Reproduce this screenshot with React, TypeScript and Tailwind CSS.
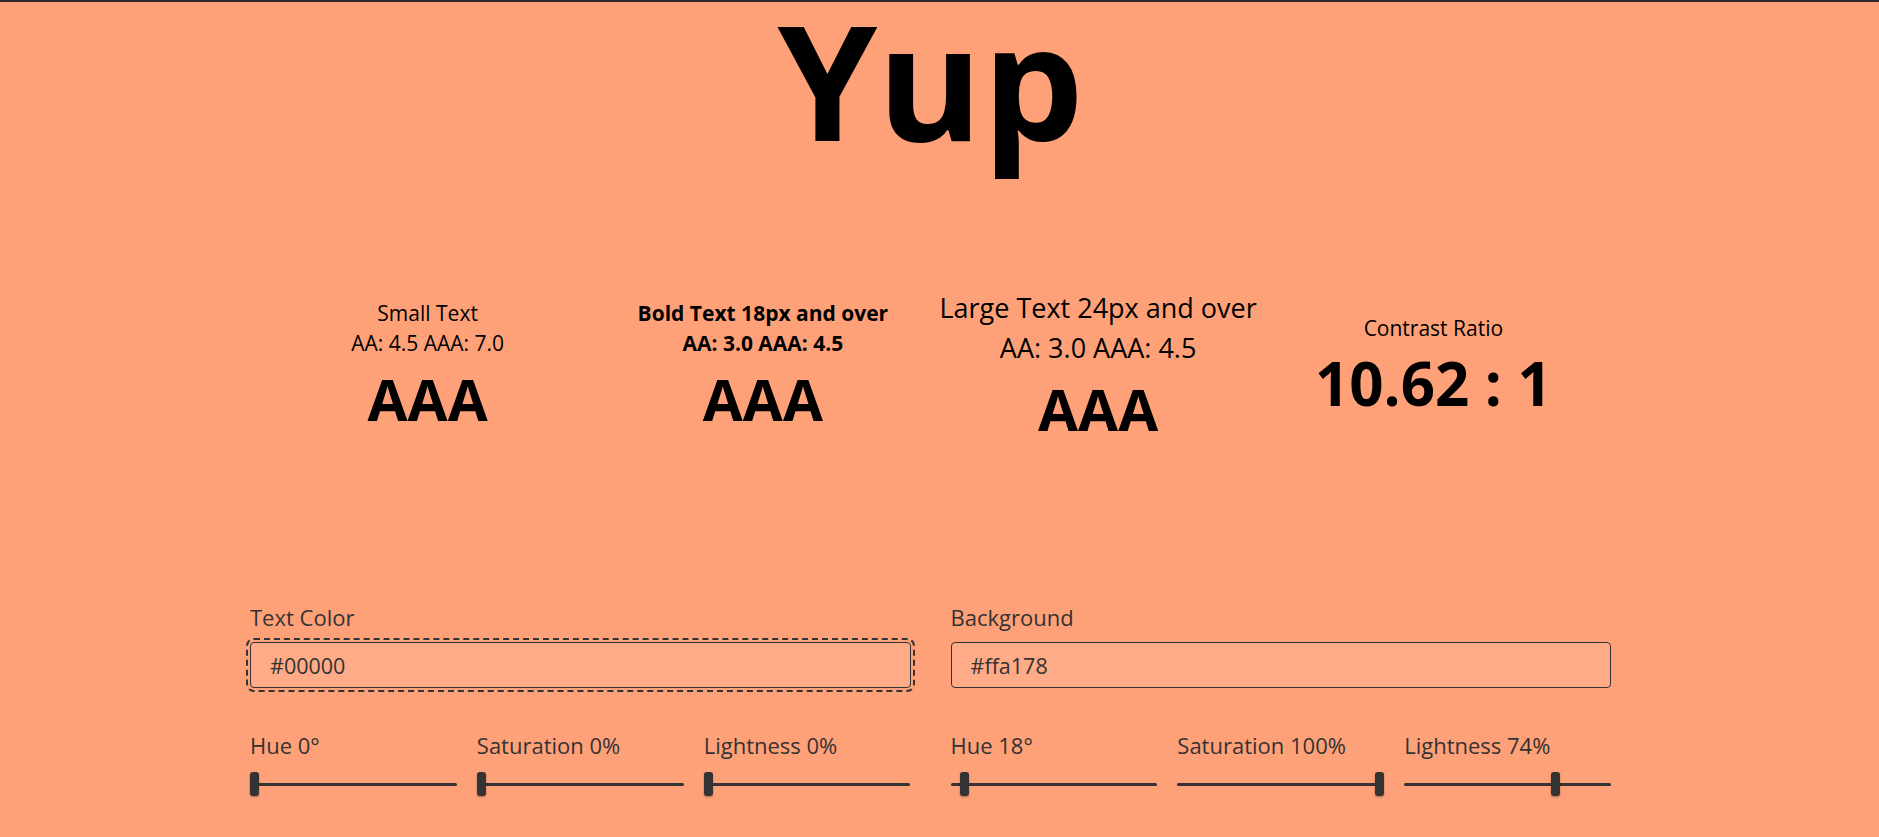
import React from "react";

type SliderProps = { label: string; value: number; max: number };

function Slider({ label, value, max }: SliderProps) {
  const pct = value / max;
  return (
    <div className="flex flex-col">
      <div className="text-[22px] leading-[30px] text-[#333]">{label}</div>
      <div className="relative mt-[12px] h-[24px]">
        <div className="absolute left-0 right-0 top-[10.5px] h-[3px] rounded-full bg-[#333]" />
        <div
          className="absolute top-0 h-[24px] w-[9px] rounded-[3px] bg-[#333] shadow-[0_1px_2px_rgba(0,0,0,0.35)]"
          style={{ left: `calc(${pct} * (100% - 9px))` }}
        />
      </div>
    </div>
  );
}

type ColorPanelProps = {
  label: string;
  value: string;
  focused?: boolean;
  sliders: SliderProps[];
};

function ColorPanel({ label, value, focused, sliders }: ColorPanelProps) {
  return (
    <div className="flex flex-col">
      <label className="text-[22px] leading-[30px] text-[#333]">{label}</label>
      <input
        readOnly
        value={value}
        className={
          "mt-[10px] h-[46px] w-full rounded-[4px] border border-[#333] bg-[#ffab87] pl-[19px] text-[21.5px] text-[#333] " +
          (focused ? "outline-2 outline-dashed outline-offset-2 outline-[#333]" : "outline-none")
        }
      />
      <div className="mt-[42px] grid grid-cols-3 gap-x-[20px]">
        {sliders.map((s) => (
          <Slider key={s.label} {...s} />
        ))}
      </div>
    </div>
  );
}

export default function App() {
  return (
    <div className="min-h-[837px] border-t-2 border-[#2b2b2b] bg-[#ffa178] font-['Open_Sans',sans-serif] text-black">
      <div className="pr-[18px]">
        <div className="mx-auto w-[1361px]">
          <h1 className="text-center text-[160px] font-bold leading-[154px]">Yup</h1>

          <div className="flex h-[414px] items-center px-[10px]">
            <div className="flex flex-1 flex-col items-center text-center">
              <div className="text-[21px] leading-[30px]">Small Text</div>
              <div className="text-[21px] leading-[30px]">AA: 4.5 AAA: 7.0</div>
              <div className="mt-[12px] text-[58px] font-bold leading-none">AAA</div>
            </div>
            <div className="flex flex-1 flex-col items-center text-center">
              <div className="text-[21px] font-bold leading-[30px]">Bold Text 18px and over</div>
              <div className="text-[21px] font-bold leading-[30px]">AA: 3.0 AAA: 4.5</div>
              <div className="mt-[12px] text-[58px] font-bold leading-none">AAA</div>
            </div>
            <div className="flex flex-1 flex-col items-center text-center">
              <div className="text-[27px] leading-[40px]">Large Text 24px and over</div>
              <div className="text-[27px] leading-[40px]">AA: 3.0 AAA: 4.5</div>
              <div className="mt-[12px] text-[58px] font-bold leading-none">AAA</div>
            </div>
            <div className="flex flex-1 flex-col items-center text-center">
              <div className="text-[21px] leading-[30px]">Contrast Ratio</div>
              <div className="mt-[10px] text-[60px] font-bold leading-none">10.62 : 1</div>
            </div>
          </div>

          <div className="mt-[32px] grid grid-cols-2 gap-x-[40px]">
            <ColorPanel
              label="Text Color"
              value="#00000"
              focused
              sliders={[
                { label: "Hue 0°", value: 0, max: 360 },
                { label: "Saturation 0%", value: 0, max: 100 },
                { label: "Lightness 0%", value: 0, max: 100 },
              ]}
            />
            <ColorPanel
              label="Background"
              value="#ffa178"
              sliders={[
                { label: "Hue 18°", value: 18, max: 360 },
                { label: "Saturation 100%", value: 100, max: 100 },
                { label: "Lightness 74%", value: 74, max: 100 },
              ]}
            />
          </div>
        </div>
      </div>
    </div>
  );
}
